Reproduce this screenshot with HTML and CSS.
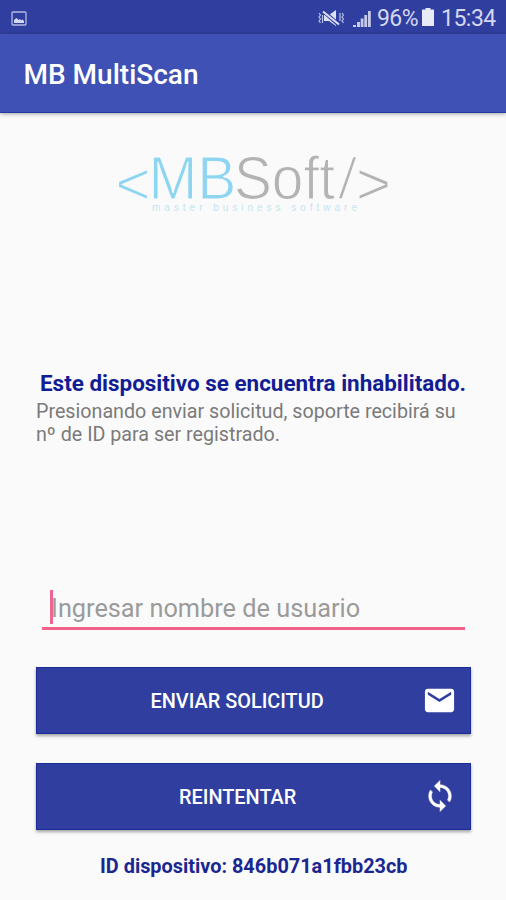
FILE: index.html
```html
<!DOCTYPE html>
<html lang="es">
<head>
<meta charset="utf-8">
<title>MB MultiScan</title>
<link rel="stylesheet" href="styles.css">
</head>
<body>
<div class="screen">
  <div class="status-bar">
    <svg class="status-picture" width="16" height="15" viewBox="0 0 16 15"><rect x="1" y="1" width="14" height="13" rx="1" fill="none" stroke="#b3bae2" stroke-width="1.3"/><path d="M3 12V9l2.500-2 2 2 1.200-1 1.300 1.200L11.500 8.500 13 10v2z" fill="#d5d9f0"/></svg>
    <svg class="status-mute" width="26" height="18" viewBox="0 0 26 18"><path d="M6 6h5l7-5v16l-7-5H6z" fill="#dde0f4"/><path d="M5 2l16 14" stroke="#303f9f" stroke-width="4"/><path d="M5 2.500l16 13" stroke="#dde0f4" stroke-width="2"/><path d="M1 4l1.500 2L1 8l1.500 2L1 12l1.500 2M4.500 6v8M22 4v8M24 4l1.500 2L24 8l1.500 2-1.500 2 1.500 2" fill="none" stroke="#b9c0e5" stroke-width="1.200"/></svg>
    <svg class="status-signal" width="18" height="17" viewBox="0 0 18 17"><path d="M0 17v-2h3v2zM4 17v-5h3v5zM7.700 17V8.500h2.800V17zM11.300 17V5h2.800v12zM15 17V1h2.800v16z" fill="#c6cbea"/></svg>
    <span class="battery-level">96%</span>
    <svg class="status-battery" width="12" height="18" viewBox="0 0 12 18"><path d="M3.500 0h5v1.500H12V18H0V1.500h3.500z" fill="#e8eaf8"/></svg>
    <span class="clock">15:34</span>
  </div>
  <header class="app-bar"><h1>MB MultiScan</h1></header>
  <main class="content">
    <svg class="logo" width="290" height="90" viewBox="-8 -15 290 90">
      <g class="logo-name">
        <text class="cyan bracket" x="-1.500" y="51.500" textLength="35" lengthAdjust="spacingAndGlyphs">&lt;</text>
        <text class="cyan" x="31.500" y="46.500" textLength="88" lengthAdjust="spacingAndGlyphs">MB</text>
        <text class="gray" x="117" y="46.500" textLength="101" lengthAdjust="spacingAndGlyphs">Soft</text>
        <text class="gray slash" x="220" y="46.500" textLength="21" lengthAdjust="spacingAndGlyphs">/</text>
        <text class="gray bracket" x="239" y="51.500" textLength="35" lengthAdjust="spacingAndGlyphs">&gt;</text>
      </g>
      <text class="tagline" x="35" y="58.500" textLength="205">master business software</text>
    </svg>
    <h2 class="notice">Este dispositivo se encuentra inhabilitado.</h2>
    <p class="hint">Presionando enviar solicitud, soporte recibirá su<br>nº de ID para ser registrado.</p>
    <div class="field"><i class="caret"></i><span class="placeholder">Ingresar nombre de usuario</span></div>
    <button class="action"><span class="send">ENVIAR SOLICITUD</span>
      <svg class="icon" width="35" height="35" viewBox="0 0 24 24"><path fill="#fff" d="M20 4H4c-1.100 0-1.990.9-1.990 2L2 18c0 1.100.9 2 2 2h16c1.100 0 2-.9 2-2V6c0-1.100-.9-2-2-2zm0 4l-8 5-8-5V6l8 5 8-5v2z"/></svg>
    </button>
    <button class="action"><span class="retry">REINTENTAR</span>
      <svg class="icon" width="34" height="34" viewBox="0 0 24 24"><path fill="#fff" stroke="#fff" stroke-width=".3" d="M12 4V1L8 5l4 4V6c3.310 0 6 2.690 6 6 0 1.010-.25 1.970-.7 2.800l1.460 1.460C19.540 15.030 20 13.570 20 12c0-4.420-3.580-8-8-8zm0 14c-3.310 0-6-2.690-6-6 0-1.010.25-1.970.7-2.800L5.240 7.740C4.460 8.970 4 10.430 4 12c0 4.420 3.580 8 8 8v3l4-4-4-4v3z"/></svg>
    </button>
    <p class="device">ID dispositivo: 846b071a1fbb23cb</p>
  </main>
</div>
</body>
</html>
```
FILE: styles.css
```css
* { box-sizing: border-box; }
body { margin: 0; background: #fafafa; font-family: Roboto, "Liberation Sans", sans-serif; }
h1, h2, p { margin: 0; white-space: nowrap; }
.screen { width: 506px; height: 900px; overflow: hidden; }
.status-bar { height: 34px; background: #303f9f; color: #d3d7ef; display: flex; align-items: center; padding: 2px 12px 0 11px; font-size: 23px; line-height: 32px; white-space: nowrap; }
.status-mute { margin-left: auto; }
.status-signal { margin: 0 6px 0 9px; }
.battery-level { width: 41px; letter-spacing: -0.6px; padding-top: 2px; }
.status-battery { margin: 0 7px 2px 4px; }
.clock { width: 53px; letter-spacing: -0.5px; padding-top: 2px; }
.app-bar { height: 79px; background: #3f51b5; padding: 0 23.500px; box-shadow: 0 1px 4px rgba(0,0,0,.35); border-bottom: 1px solid #2639a8; }
.app-bar h1 { color: #fff; font-size: 28px; font-weight: 500; line-height: 81px; }
.content { display: flex; flex-direction: column; align-items: stretch; padding: 24px 35px 0 36px; }
.logo { align-self: flex-start; margin-left: 73px; flex: none; }
.logo-name { font-family: "Liberation Sans", Arial, sans-serif; font-size: 61px; }
.logo-name text { stroke: #fafafa; stroke-width: 1.200px; }
.logo-name .slash { font-size: 59px; stroke-width: 2.400px; }
.logo-name .bracket { font-size: 60px; }
.cyan { fill: #8ed5f2; }
.gray { fill: #b3b3b3; }
.tagline { font-family: "Liberation Sans", sans-serif; font-size: 10px; fill: #c5e6ef; }
.notice { margin: 142px 0 0 4px; color: #121d94; font-size: 22.450px; font-weight: 700; line-height: 28px; }
.hint { margin-top: 4px; color: #7a7a7a; font-size: 19.700px; line-height: 22.500px; }
.field { margin: 144px 6px 0; height: 40px; border-bottom: 3px solid #f4628b; display: flex; align-items: flex-start; padding-left: 8px; }
.caret { width: 3px; height: 34px; background: #ee6690; }
.placeholder { margin-left: -2px; font-size: 25.300px; line-height: 37px; color: #9b9b9b; white-space: nowrap; }
.action { margin: 37px 0 0; height: 67px; padding: 2px 13px 0 0; border: 1px solid #1c2b98; background: #303f9f; box-shadow: 0 2px 3px rgba(0,0,0,.35); display: flex; align-items: center; justify-content: space-between; color: #fff; font: 500 19.900px Roboto, sans-serif; }
.action + .action { margin-top: 29px; }
.send { margin-left: 113.500px; }
.retry { margin-left: 142px; }
.icon { flex: none; margin-bottom: 3px; }
.device { margin: 24px 0 0 64px; color: #1b2790; font-size: 19.900px; font-weight: 700; line-height: 26px; }
```
